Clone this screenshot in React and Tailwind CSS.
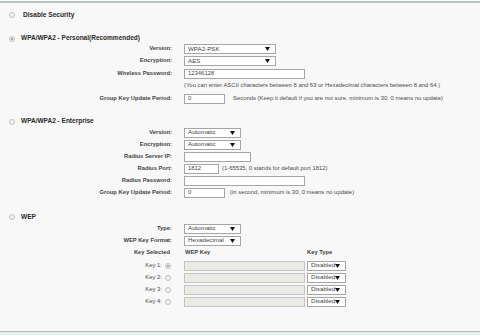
import React from 'react';

const Radio = ({ checked }) => (
    <span className="w-[6px] h-[6px] rounded-full border border-[#c0c0c0] bg-[#f2f2f2] flex items-center justify-center shrink-0">
        {checked && <span className="w-[2px] h-[2px] rounded-full bg-[#8a8a8a]" />}
    </span>
);

const Arrow = () => (
    <svg width="5" height="4" viewBox="0 0 5 4" className="shrink-0">
        <path d="M0 0 L5 0 L2.5 4 Z" fill="#111" />
    </svg>
);

const Select = ({ value, className }) => (
    <div className={`h-[10px] border border-[#a6a6a6] bg-white flex items-center justify-between pl-[3px] pr-[5px] text-[6.2px] leading-none text-[#444] ${className}`}>
        <span>{value}</span>
        <Arrow />
    </div>
);

const Input = ({ value, className }) => (
    <div className={`h-[10px] border border-[#a6a6a6] bg-white flex items-center pl-[3px] text-[5.9px] leading-none text-[#444] ${className}`}>
        {value}
    </div>
);

const Row = ({ label, className, children }) => (
    <div className={`flex items-center ${className}`}>
        <div className="w-[172px] text-right font-bold text-[5.8px] text-[#444] leading-none">{label}</div>
        <div className="ml-[12px] flex items-center text-[5.9px] text-[#4a4a4a] leading-none">{children}</div>
    </div>
);

const Title = ({ checked, text, className }) => (
    <div className={`flex items-center h-[8px] pl-[9px] ${className}`}>
        <Radio checked={checked} />
        <span className="ml-[6px] font-bold text-[6.5px] text-[#2a2a2a] leading-none">{text}</span>
    </div>
);

const KeyRow = ({ n, checked }) => (
    <div className="flex items-center h-[12px]">
        <div className="w-[172px] flex items-center justify-end pr-[1px]">
            <span className="text-[5.9px] text-[#4a4a4a] leading-none">Key {n}:</span>
            <span className="ml-[3px]"><Radio checked={checked} /></span>
        </div>
        <div className="ml-[12px] flex items-center">
            <div className="w-[121px] h-[10px] border border-[#c4c4c4] bg-[#ebebe6]" />
            <Select value="Disabled" className="ml-[2px] w-[39px] pl-[2px] pr-[3px] text-[5.6px]" />
        </div>
    </div>
);

export default function App() {
    return (
        <div className="w-[480px] h-[335px] bg-[#f8f8f8] flex flex-col" style={{ fontFamily: '"Liberation Sans", Arial, sans-serif' }}>
            <div className="h-[1px] bg-white" />
            <div className="h-[2px] bg-[#b2c5be]" />

            <div className="flex items-center h-[10px] mt-[7px] pl-[9px]">
                <Radio />
                <span className="ml-[8px] font-bold text-[6.6px] text-[#2a2a2a] leading-none">Disable Security</span>
            </div>

            <Title checked text="WPA/WPA2 - Personal(Recommended)" className="mt-[14.5px]" />
            <Row label="Version:" className="h-[12.5px]">
                <Select value="WPA2-PSK" className="w-[92px]" />
            </Row>
            <Row label="Encryption:" className="h-[12.5px]">
                <Select value="AES" className="w-[92px]" />
            </Row>
            <Row label="Wireless Password:" className="h-[12.5px]">
                <Input value="12346128" className="w-[121px]" />
            </Row>
            <Row label="" className="h-[12.5px]">
                <span>(You can enter ASCII characters between 8 and 63 or Hexadecimal characters between 8 and 64.)</span>
            </Row>
            <Row label="Group Key Update Period:" className="h-[12.5px]">
                <Input value="0" className="w-[41px]" />
                <span className="ml-[8px]">Seconds (Keep it default if you are not sure, minimum is 30, 0 means no update)</span>
            </Row>

            <Title text="WPA/WPA2 - Enterprise" className="mt-[12.5px]" />
            <div className="h-[1px]" />
            <Row label="Version:" className="h-[12px]">
                <Select value="Automatic" className="w-[57px]" />
            </Row>
            <Row label="Encryption:" className="h-[12px]">
                <Select value="Automatic" className="w-[57px]" />
            </Row>
            <Row label="Radius Server IP:" className="h-[12px]">
                <Input value="" className="w-[67px]" />
            </Row>
            <Row label="Radius Port:" className="h-[12px]">
                <Input value="1812" className="w-[35px]" />
                <span className="ml-[3px]">(1-65535, 0 stands for default port 1812)</span>
            </Row>
            <Row label="Radius Password:" className="h-[12px]">
                <Input value="" className="w-[121px]" />
            </Row>
            <Row label="Group Key Update Period:" className="h-[12px]">
                <Input value="0" className="w-[41px]" />
                <span className="ml-[5px]">(in second, minimum is 30, 0 means no update)</span>
            </Row>

            <Title text="WEP" className="mt-[14.5px]" />
            <div className="h-[1.5px]" />
            <Row label="Type:" className="h-[12px]">
                <Select value="Automatic" className="w-[57px]" />
            </Row>
            <Row label="WEP Key Format:" className="h-[12px]">
                <Select value="Hexadecimal" className="w-[57px]" />
            </Row>
            <div className="flex items-center h-[13px]">
                <div className="w-[170px] text-right font-bold text-[5.8px] text-[#444] leading-none">Key Selected</div>
                <div className="ml-[15px] w-[122px] font-bold text-[5.8px] text-[#444] leading-none">WEP Key</div>
                <div className="font-bold text-[5.8px] text-[#444] leading-none">Key Type</div>
            </div>
            <KeyRow n={1} checked />
            <KeyRow n={2} />
            <KeyRow n={3} />
            <KeyRow n={4} />

            <div className="flex-1" />
            <div className="h-[1px] bg-[#a9bcb5]" />
            <div className="h-[3px] bg-[#e4f1ec]" />
        </div>
    );
}
